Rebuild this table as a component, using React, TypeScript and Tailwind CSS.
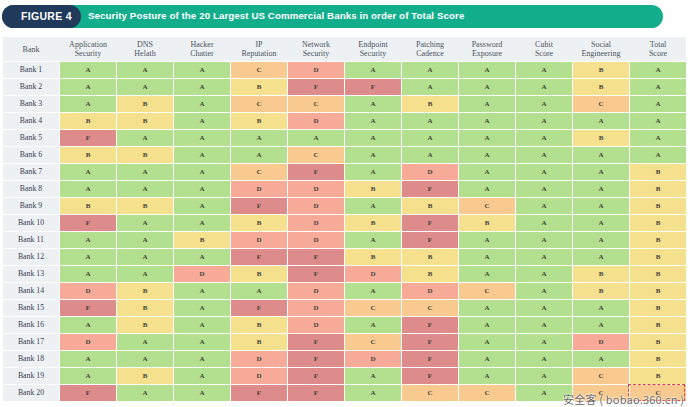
import React from 'react';

type Grade = 'A' | 'B' | 'C' | 'D' | 'F';

const columns = [
  ['Application', 'Security'],
  ['DNS', 'Helath'],
  ['Hacker', 'Chatter'],
  ['IP', 'Reputation'],
  ['Network', 'Security'],
  ['Endpoint', 'Security'],
  ['Patching', 'Cadence'],
  ['Password', 'Exposure'],
  ['Cubit', 'Score'],
  ['Social', 'Engineering'],
  ['Total', 'Score'],
];

const rows: string[] = [
  'AAACDAAAABA',
  'AAABFFAAABA',
  'ABACCABAACA',
  'BBABDAAAAAA',
  'FAAAAAAAABA',
  'BBAACAAAAAA',
  'AAACFADAAAB',
  'AAADDBFAAAB',
  'BBAFDABCAAB',
  'FAABDBFBAAB',
  'AABDDAFAAAB',
  'AAAFFBBAAAB',
  'AADBFDBAABB',
  'DBAADADCABB',
  'FBAFDCCAAAB',
  'ABABDAFAAAB',
  'DAABFCFAADB',
  'AAADFDFAAAB',
  'ABADFAFAACB',
  'FAAFFACCACC',
];

const gradeBg: Record<Grade, string> = {
  A: 'bg-[#b3e08f]',
  B: 'bg-[#f5e08e]',
  C: 'bg-[#f8ca8f]',
  D: 'bg-[#f8aa99]',
  F: 'bg-[#de8b8b]',
};

const serif = { fontFamily: '"Liberation Serif", "DejaVu Serif", serif' };

const App: React.FC = () => {
  return (
    <div className="w-[691px] h-[407px] bg-white overflow-hidden relative">
      {/* title bar */}
      <div
        className="ml-[2px] mt-[5px] w-[661px] h-[23px] rounded-full bg-[#12ae8b] flex items-center"
        style={{ fontFamily: '"Liberation Sans", Arial, sans-serif' }}
      >
        <div className="h-full w-[79px] rounded-full bg-[#213a5c] flex items-center pl-[19px] text-white font-bold text-[10.5px] tracking-[0.3px]">
          FIGURE 4
        </div>
        <div className="pl-[7px] text-white font-bold text-[9.7px] tracking-[0.1px]">
          Security Posture of the 20 Largest US Commercial Banks in order of Total Score
        </div>
      </div>

      {/* table */}
      <div className="ml-[3px] mt-[9px] w-[683px]" style={serif}>
        <div className="h-[24px] bg-[#eef1f3] grid grid-cols-[repeat(12,56px)] gap-x-px items-center text-[8px] leading-[9px] text-[#4a5262] text-center">
          <div>Bank</div>
          {columns.map((c) => (
            <div key={c.join(' ')}>
              <div>{c[0]}</div>
              <div>{c[1]}</div>
            </div>
          ))}
        </div>
        <div className="mt-px grid grid-cols-[repeat(12,56px)] auto-rows-[16px] gap-px">
          {rows.map((r, i) => (
            <React.Fragment key={i}>
              <div className="bg-[#eef1f3] flex items-center justify-center text-[7.8px] text-[#363e50]">
                Bank {i + 1}
              </div>
              {r.split('').map((g, j) => (
                <div
                  key={j}
                  className={`${gradeBg[g as Grade]} flex items-center justify-center text-[7px] font-bold text-[#45443a]`}
                >
                  {g}
                </div>
              ))}
            </React.Fragment>
          ))}
        </div>
      </div>

      {/* watermark */}
      <div className="absolute left-[628px] top-[384px] w-[57px] h-[17px] border border-dashed border-[#e23b3b]" />
      <div
        className="absolute left-[563px] top-[391px] text-[11px] text-[#6b6b6b] tracking-[0.2px]"
        style={{ fontFamily: '"Noto Sans CJK SC", "DejaVu Sans", sans-serif', textShadow: '0 0 2px #fff, 0 0 2px #fff' }}
      >
        安全客 ( bobao.360.cn )
      </div>
    </div>
  );
};

export default App;
